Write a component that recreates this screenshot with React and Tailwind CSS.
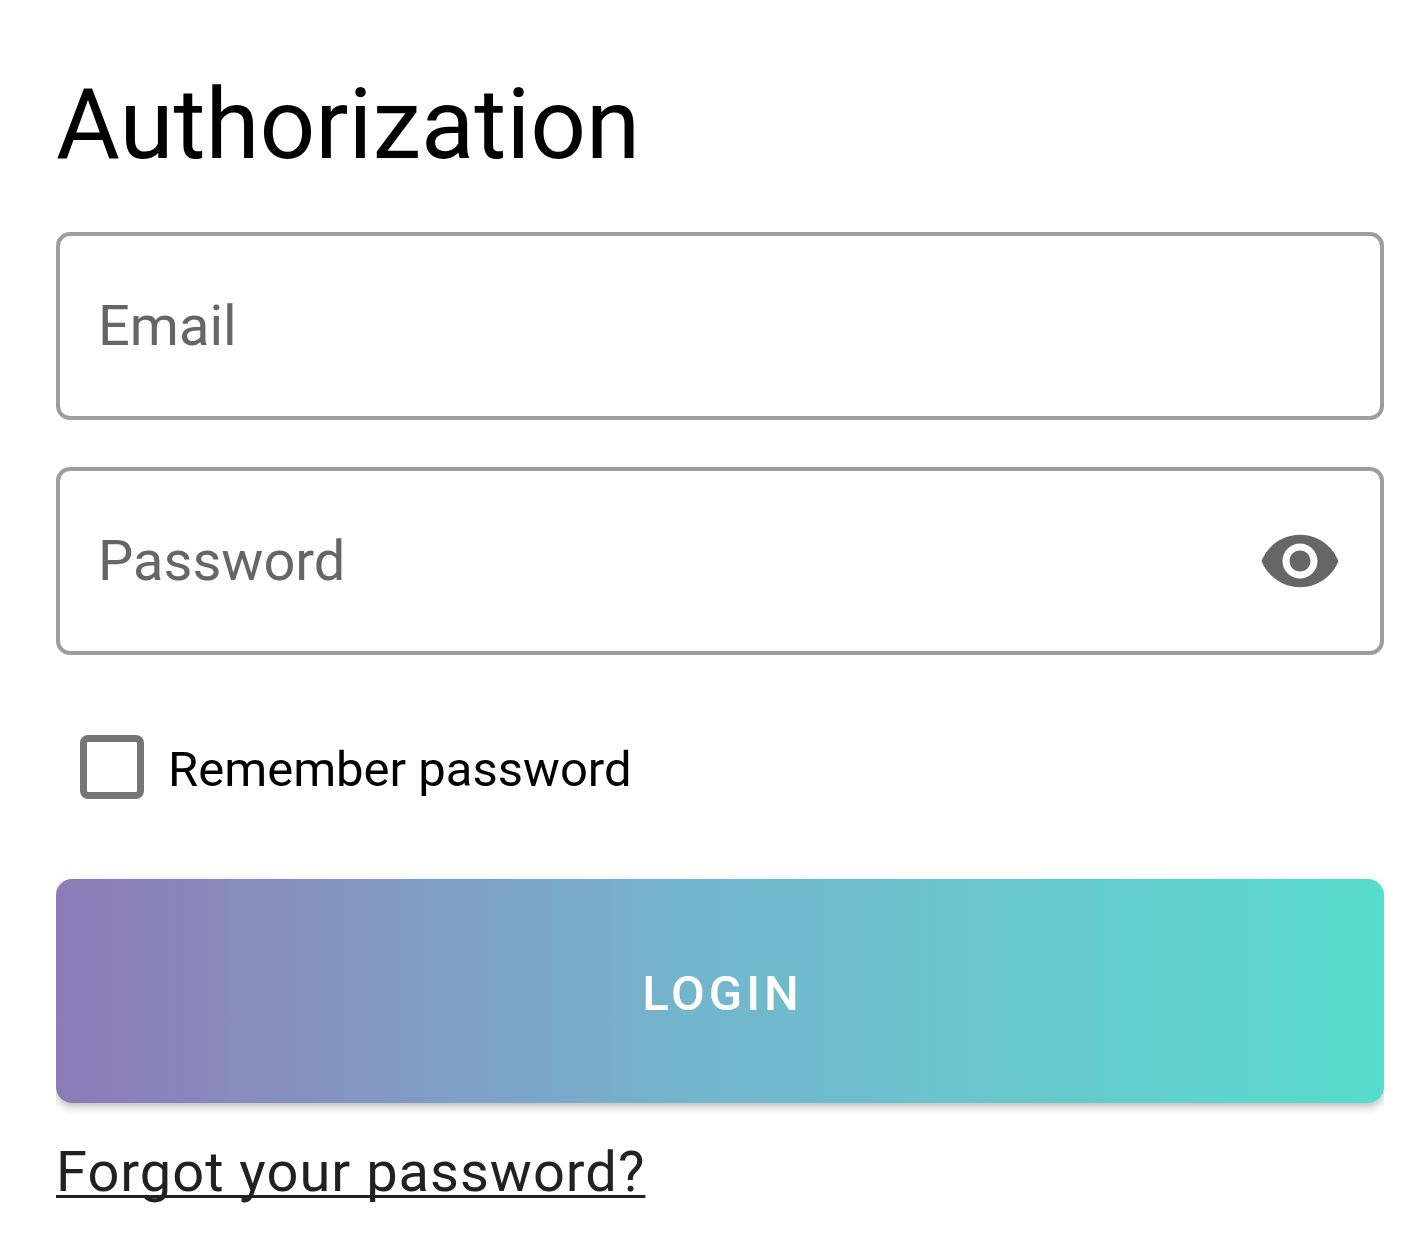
export default function App() {
  return (
    <main className="min-h-screen bg-white pt-[68px] pr-[37px] pb-8 pl-14 font-['Roboto',sans-serif] text-black">
      <h1 className="text-[98px] leading-[114px]">Authorization</h1>
      <form onSubmit={(e) => e.preventDefault()}>
        <input
          type="email"
          aria-label="Email"
          placeholder="Email"
          className="mt-[50px] block h-[188px] w-full rounded-[14px] border-4 border-[#9e9e9e] bg-white px-[38px] text-[56px] placeholder:text-[#666666] placeholder:opacity-100"
        />
        <div className="mt-[47px] flex h-[188px] items-center rounded-[14px] border-4 border-[#9e9e9e] pr-[38px] pl-[38px]">
          <input
            type="password"
            aria-label="Password"
            placeholder="Password"
            className="h-full min-w-0 flex-1 bg-transparent text-[56px] outline-none placeholder:text-[#666666] placeholder:opacity-100"
          />
          <button type="button" aria-label="Show password">
            <svg viewBox="0 0 24 24" className="h-[84px] w-[84px] fill-[#666666]">
              <path d="M12 4.5C7 4.5 2.73 7.61 1 12c1.73 4.39 6 7.5 11 7.5s9.27-3.11 11-7.5c-1.73-4.39-6-7.5-11-7.5zM12 17c-2.76 0-5-2.24-5-5s2.24-5 5-5 5 2.24 5 5-2.24 5-5 5zm0-8c-1.66 0-3 1.34-3 3s1.34 3 3 3 3-1.34 3-3-1.34-3-3-3z" />
            </svg>
          </button>
        </div>
        <label className="mt-20 ml-6 flex w-fit items-center gap-6 text-[49px]">
          <input
            type="checkbox"
            className="h-16 w-16 appearance-none rounded-[8px] border-[7px] border-[#757575] checked:bg-[#757575]"
          />
          <span className="pt-[6px] leading-[58px]">Remember password</span>
        </label>
        <div className="mt-20 overflow-x-clip">
          <button
            type="submit"
            className="block h-56 w-full rounded-[16px] bg-linear-to-r from-[#8c7ab6] via-[#73b4cd] via-47% to-[#57dccd] pt-[5px] pl-[5px] text-[49px] font-medium tracking-[4px] text-white shadow-[0_4px_8px_rgba(0,0,0,0.25)]"
          >
            LOGIN
          </button>
        </div>
      </form>
      <a
        href="#"
        className="mt-9 block w-fit text-[56px] leading-[66px] tracking-[1px] text-[#212121] underline decoration-3 underline-offset-4 [text-decoration-skip-ink:none]"
      >
        Forgot your password?
      </a>
    </main>
  );
}
